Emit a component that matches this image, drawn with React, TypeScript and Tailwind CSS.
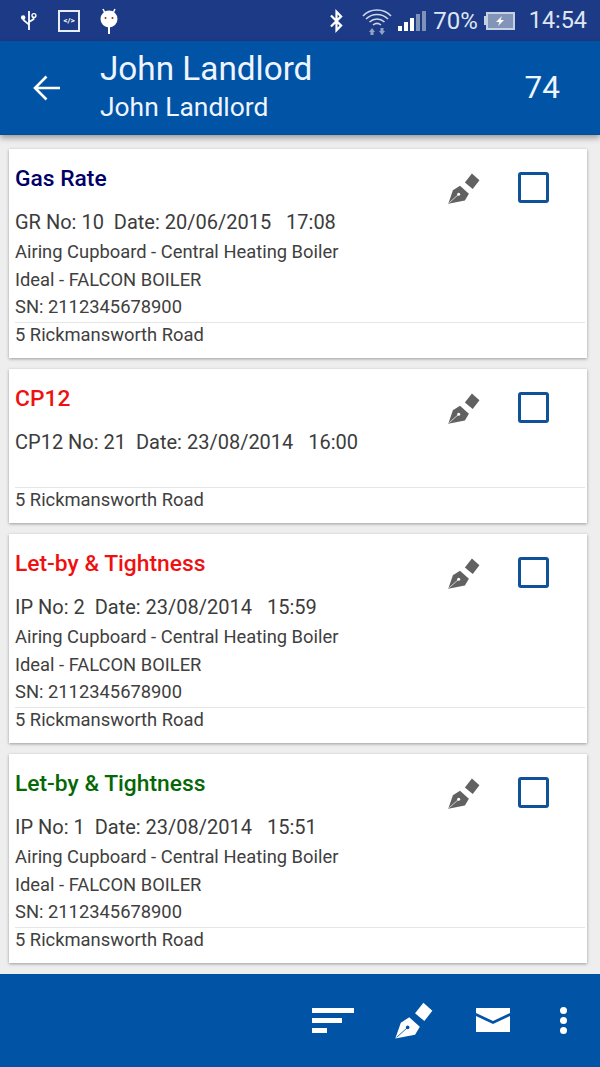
import React from 'react';

const ADDRESS = '5 Rickmansworth Road';
const LOCATION = ['Airing Cupboard - Central Heating Boiler', 'Ideal - FALCON BOILER', 'SN: 2112345678900'];

const records = [
  { id: 1, title: 'Gas Rate', color: 'text-[#000066]', info: 'GR No: 10  Date: 20/06/2015   17:08', lines: LOCATION },
  { id: 2, title: 'CP12', color: 'text-[#ee1111]', info: 'CP12 No: 21  Date: 23/08/2014   16:00', lines: [] },
  { id: 3, title: 'Let-by & Tightness', color: 'text-[#ee1111]', info: 'IP No: 2  Date: 23/08/2014   15:59', lines: LOCATION },
  { id: 4, title: 'Let-by & Tightness', color: 'text-[#056705]', info: 'IP No: 1  Date: 23/08/2014   15:51', lines: LOCATION },
];

const PenIcon = ({ className, nib }: { className: string; nib: string }) => (
  <svg viewBox="0 0 36 36" className={className}>
    <path d="M26.9 1.6 L35.4 9.2 L27.8 19 L19 11.7 Z" fill="currentColor" />
    <path d="M13.5 15.5 L23.5 24.5 L19 32 L0.3 35.6 L5.5 20.5 Z" fill="currentColor" />
    <circle cx="12" cy="25" r="1.7" fill={nib} />
    <path d="M11.5 25.5 L1.5 34.5" stroke={nib} strokeWidth="0.8" />
  </svg>
);

const RecordCard = ({ record }: { record: (typeof records)[number] }) => (
  <div className="bg-white mx-[9px] w-[578px] shadow-[0_1px_3px_rgba(0,0,0,0.35)]">
    <div className="flex justify-between pl-[6px] pr-[38px]">
      <div className="flex-1">
        <h3 className={`text-[22.8px] leading-[26px] font-medium mt-[17px] ${record.color}`}>{record.title}</h3>
        <p className="text-[20px] leading-[26px] text-[#3c3c3c] mt-[17px] whitespace-pre">{record.info}</p>
        {record.lines.length > 0 ? (
          <div className="text-[18.35px] leading-[27.5px] text-[#404040] mt-[3px] mb-[1.5px]">
            {record.lines.map(line => (
              <p key={line}>{line}</p>
            ))}
          </div>
        ) : (
          <div className="h-[32px]"></div>
        )}
      </div>
      <div className="flex items-start gap-[38px] pt-[23px]">
        <PenIcon className="w-[32px] h-[32px] text-[#616161]" nib="#ffffff" />
        <div className="w-[31px] h-[31px] border-[3px] border-[#0f5299] rounded-[3px]"></div>
      </div>
    </div>
    <div className="ml-[6px] mr-[2px] border-t border-[#e6e6e6] text-[18.35px] leading-[24px] text-[#404040] h-[36px]">{ADDRESS}</div>
  </div>
);

const App: React.FC = () => {
  return (
    <div className="w-[600px] h-[1067px] overflow-hidden flex flex-col bg-[#eeeeee] font-['Roboto',sans-serif]">
      {/* Status bar */}
      <div className="h-[41px] bg-[#1c3a85] flex items-center pl-[20px] pr-[13px] text-[#dfe6f2]">
        <svg viewBox="0 0 20 24" className="w-[18px] h-[22px] text-white">
          <path d="M10 1 L10 22 M10 16 L4 11 L4 8 M10 13 L15 10 L15 7" fill="none" stroke="currentColor" strokeWidth="2" />
          <circle cx="3.5" cy="8" r="2.5" fill="currentColor" />
          <circle cx="15.5" cy="6" r="2.2" fill="none" stroke="currentColor" strokeWidth="1.5" />
        </svg>
        <div className="w-[22px] h-[22px] ml-[20px] border-2 border-[#e8edf5] flex items-center justify-center text-[8px] font-bold text-white leading-none">
          {'</>'}
        </div>
        <svg viewBox="0 0 20 26" className="w-[20px] h-[26px] ml-[19px] text-white">
          <path d="M4 1 L6 5 M16 1 L14 5" stroke="currentColor" strokeWidth="1.6" />
          <circle cx="10" cy="11" r="8.5" fill="currentColor" />
          <circle cx="6.5" cy="10" r="1" fill="#7a3b22" />
          <circle cx="13.5" cy="10" r="1" fill="#7a3b22" />
          <rect x="9" y="19" width="2" height="7" fill="currentColor" />
        </svg>
        <div className="flex-1"></div>
        <svg viewBox="0 0 18 26" className="w-[17px] h-[24px] text-white">
          <path d="M3 7 L14 18 L9 23 L9 3 L14 8 L3 19" fill="none" stroke="currentColor" strokeWidth="2.4" />
        </svg>
        <svg viewBox="0 0 30 28" className="w-[30px] h-[28px] ml-[17px] text-[#cfd8e8]">
          <path d="M1 9 C8 1 22 1 29 9 M4 12 C10 6 20 6 26 12 M7.5 15 C12 11 18 11 22.5 15 M11 18 C13.5 16 16.5 16 19 18" fill="none" stroke="currentColor" strokeWidth="1.6" />
          <path d="M10 21 L13 25 H11.5 V28 H8.5 V25 H7 Z M20 28 L17 24 H18.5 V21 H21.5 V24 H23 Z" fill="#8fa3c4" />
        </svg>
        <div className="flex items-end gap-[2px] ml-[6px] h-[21px]">
          <div className="w-[4px] h-[5px] bg-white"></div>
          <div className="w-[4px] h-[9px] bg-white"></div>
          <div className="w-[4px] h-[13px] bg-white"></div>
          <div className="w-[4px] h-[17px] bg-[#7f93b8]"></div>
          <div className="w-[4px] h-[20px] bg-[#7f93b8]"></div>
        </div>
        <span className="text-[24px] leading-none ml-[7px]">70%</span>
        <div className="flex items-center ml-[6px]">
          <div className="w-[2px] h-[9px] bg-[#c5d0e2]"></div>
          <div className="w-[29px] h-[18px] border-2 border-[#c5d0e2] bg-[#8295b8] flex items-center justify-center">
            <svg viewBox="0 0 12 10" className="w-[12px] h-[10px]">
              <path d="M8 0 L2 6 H5.5 L4 10 L10 4 H6.5 Z" fill="white" />
            </svg>
          </div>
        </div>
        <span className="text-[23.4px] leading-none ml-[14px]">14:54</span>
      </div>

      {/* App bar */}
      <div className="h-[94px] bg-[#0153a5] flex items-center text-[#eef5ff] shadow-[0_3px_6px_rgba(0,0,0,0.35)] border-b border-[#0a4a96] z-10 relative">
        <svg viewBox="0 0 28 28" className="w-[28px] h-[28px] ml-[33px]">
          <path d="M27 14 H2.5 M13.5 2.5 L2 14 L13.5 25.5" fill="none" stroke="white" strokeWidth="2.6" />
        </svg>
        <div className="ml-[39px] flex-1">
          <div className="text-[33.3px] leading-[38px] -mt-[2px]">John Landlord</div>
          <div className="text-[26.4px] leading-[32px] mt-[3px]">John Landlord</div>
        </div>
        <span className="text-[31.5px] leading-none mr-[40px]">74</span>
      </div>

      {/* Records */}
      <div className="flex-1 pt-[14px] flex flex-col gap-[11px]">
        {records.map(record => (
          <RecordCard key={record.id} record={record} />
        ))}
      </div>

      {/* Bottom toolbar */}
      <div className="h-[93px] bg-[#0153a5] flex items-start pt-[25px] text-white relative">
        <div className="flex-1"></div>
        <div className="flex flex-col gap-[5px] w-[43px] mt-[9px]">
          <div className="h-[5px] w-[42px] bg-white"></div>
          <div className="h-[5px] w-[30px] bg-white"></div>
          <div className="h-[5px] w-[15px] bg-white"></div>
        </div>
        <PenIcon className="w-[38px] h-[38px] ml-[40px] text-white mt-[2px]" nib="#0153a5" />
        <svg viewBox="0 0 34 24" className="w-[34px] h-[24px] ml-[43px] mt-[9px]">
          <path d="M0 0 H34 V5 L17 13 L0 5 Z M0 8 L17 16 L34 8 V24 H0 Z" fill="white" />
        </svg>
        <div className="flex flex-col gap-[3px] ml-[50px] mr-[33px] mt-[8px]">
          <div className="w-[7px] h-[7px] rounded-full bg-white"></div>
          <div className="w-[7px] h-[7px] rounded-full bg-white"></div>
          <div className="w-[7px] h-[7px] rounded-full bg-white"></div>
        </div>
      </div>
    </div>
  );
};

export default App;
